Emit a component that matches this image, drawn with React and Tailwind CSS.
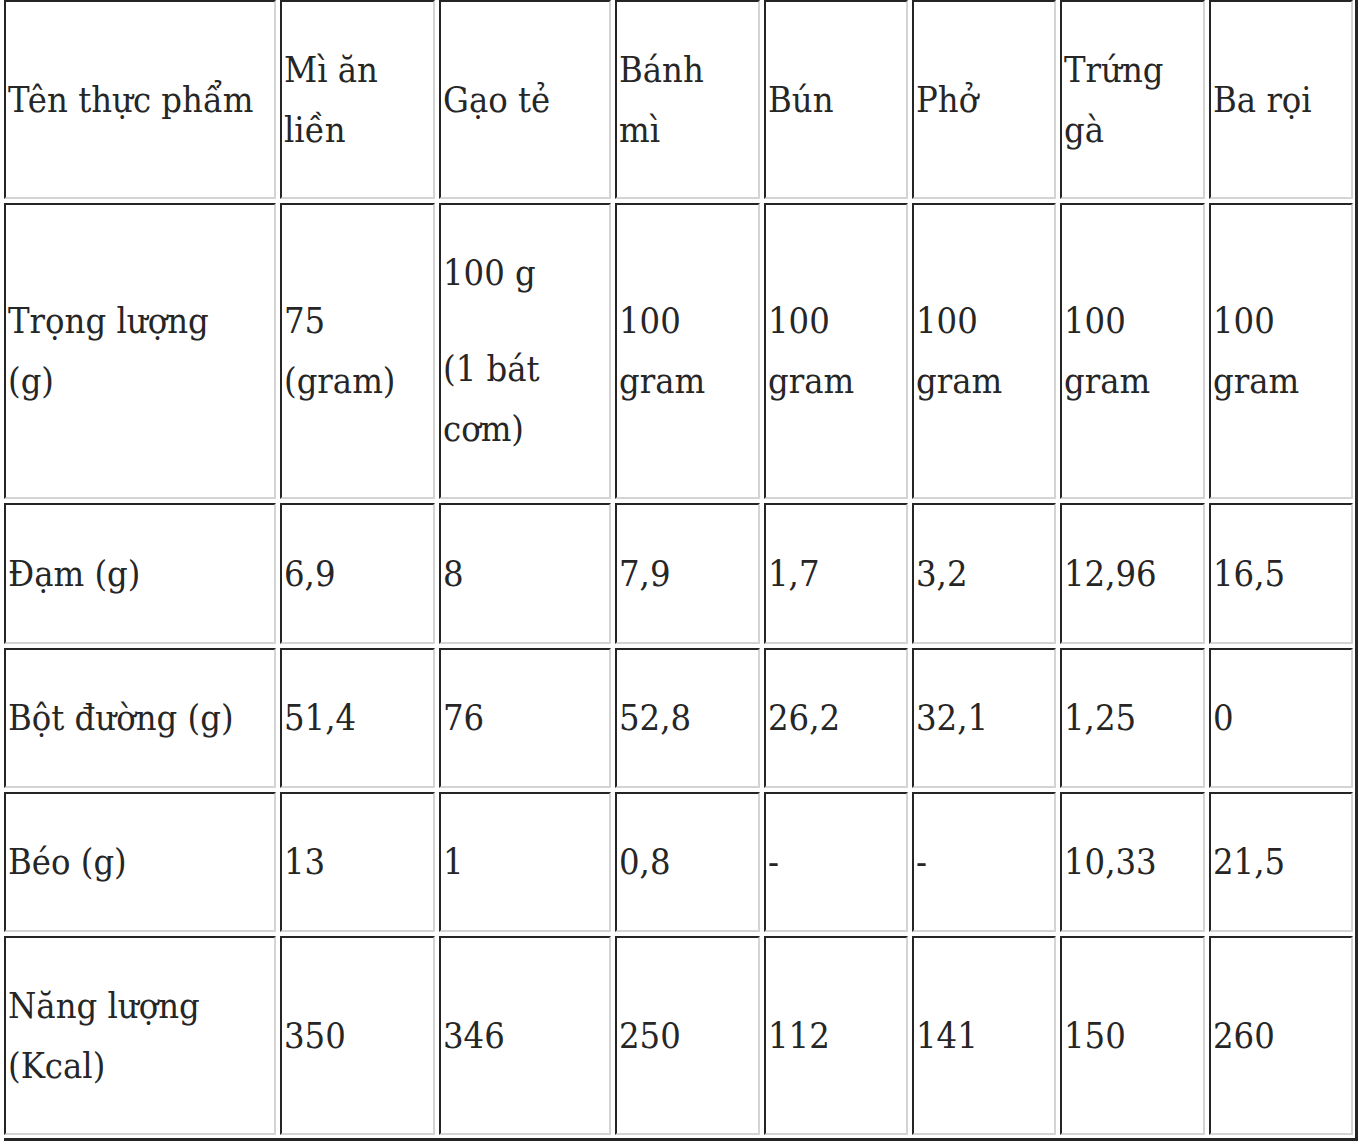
import React from "react";

const rows = [
  ["Tên thực phẩm", "Mì ăn|liền", "Gạo tẻ", "Bánh|mì", "Bún", "Phở", "Trứng|gà", "Ba rọi"],
  ["Trọng lượng|(g)", "75|(gram)", "__RICE__", "100|gram", "100|gram", "100|gram", "100|gram", "100|gram"],
  ["Đạm (g)", "6,9", "8", "7,9", "1,7", "3,2", "12,96", "16,5"],
  ["Bột đường (g)", "51,4", "76", "52,8", "26,2", "32,1", "1,25", "0"],
  ["Béo (g)", "13", "1", "0,8", "-", "-", "10,33", "21,5"],
  ["Năng lượng|(Kcal)", "350", "346", "250", "112", "141", "150", "260"],
];

function CellText({ t }) {
  if (t === "__RICE__") {
    return (
      <div>
        <div>100 g</div>
        <div className="mt-[36px]">(1 bát</div>
        <div>cơm)</div>
      </div>
    );
  }
  const parts = t.split("|");
  return (
    <div>
      {parts.map((p, i) => (
        <div key={i}>{p}</div>
      ))}
    </div>
  );
}

export default function App() {
  return (
    <div className="bg-white w-[1358px] h-[1148px] overflow-hidden pl-[4px]">
      <div className="inline-block border-r-[3px] border-b-[3px] border-[#252525] pr-[2px] pb-[3px]">
        <div
          className="grid grid-cols-[272px_155px_172px_145px_144px_144px_145px_144px] grid-rows-[199px_296px_141px_140px_140px_199px] gap-[4px] text-[#262626] text-[36px] leading-[60px]"
          style={{ fontFamily: '"DejaVu Serif Condensed", "DejaVu Serif", serif', fontStretch: "condensed" }}
        >
          {rows.map((r, ri) =>
            r.map((c, ci) => (
              <div
                key={ri + "-" + ci}
                className="flex items-center border-2 border-t-[#252525] border-l-[#252525] border-r-[#d4d4d4] border-b-[#d4d4d4] pl-[2px] whitespace-nowrap overflow-hidden"
              >
                <CellText t={c} />
              </div>
            ))
          )}
        </div>
      </div>
    </div>
  );
}
